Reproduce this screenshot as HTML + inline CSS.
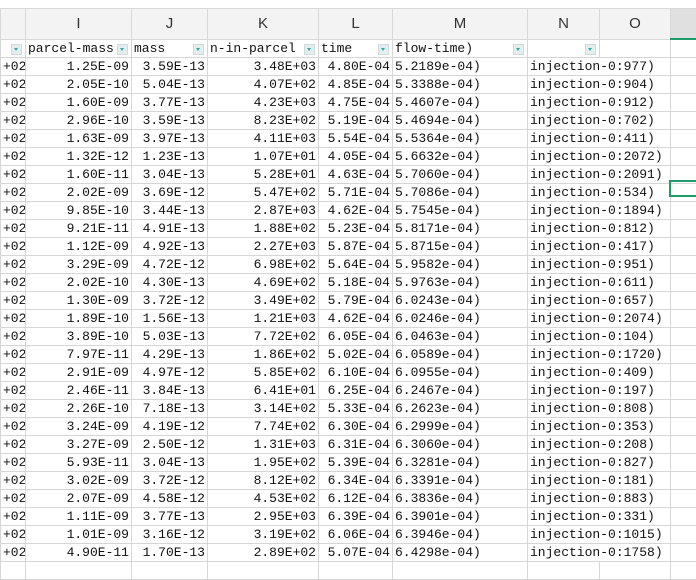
<!DOCTYPE html>
<html><head><meta charset="utf-8"><style>
body{margin:0;width:696px;height:564px;overflow:hidden;background:#fff;font-family:"Liberation Mono","Noto Sans CJK SC",monospace;}
.top{position:absolute;left:0;top:0;width:696px;height:8px;background:#fff;border-bottom:1px solid #dcdcdc}
table{position:absolute;left:0;top:8px;border-collapse:collapse;table-layout:fixed;width:696px}
td{border:1px solid #d6d6d6;height:17px;padding:0 2px;font-size:13px;line-height:17px;white-space:nowrap;overflow:hidden;color:#111}
tr.h td{height:29px;background:#f3f3f3;text-align:center;font-family:"Liberation Sans",sans-serif;font-size:15px;color:#333;border-color:#d8d8d8}
tr.h td.sel{background:#e0e0e0;border-bottom:2px solid #1f9b6b}
tr.f td{position:relative;padding-right:14px}
.dd{position:absolute;right:3px;top:4px;width:9px;height:9px;background:#e4eeee;border:1px solid #cfdcdc}
.dd:after{content:"";position:absolute;left:2px;top:3px;border-left:2.5px solid transparent;border-right:2.5px solid transparent;border-top:3px solid #3aa;}
td.r{text-align:right}
td.v{overflow:visible;border-right-style:hidden;position:relative;z-index:2}
.selc{position:absolute;left:669px;top:180px;width:27px;height:17px;border:2px solid #1f9b6b;box-sizing:border-box;border-right:none}
</style></head><body>
<div class="top"></div>
<table>
<colgroup><col style="width:25px"><col style="width:106px"><col style="width:76px"><col style="width:111px"><col style="width:74px"><col style="width:135px"><col style="width:72px"><col style="width:71px"><col style="width:26px"></colgroup>
<tr class="h"><td></td><td>I</td><td>J</td><td>K</td><td>L</td><td>M</td><td>N</td><td>O</td><td class="sel"></td></tr>
<tr class="f"><td><span class="dd"></span></td><td>parcel-mass<span class="dd"></span></td><td>mass<span class="dd"></span></td><td>n-in-parcel<span class="dd"></span></td><td>time<span class="dd"></span></td><td>flow-time)<span class="dd"></span></td><td><span class="dd"></span></td><td></td><td></td></tr>
<tr><td class="r">+02</td><td class="r">1.25E-09</td><td class="r">3.59E-13</td><td class="r">3.48E+03</td><td class="r">4.80E-04</td><td>5.2189e-04)</td><td class="v">injection-0:977)</td><td></td><td></td></tr>
<tr><td class="r">+02</td><td class="r">2.05E-10</td><td class="r">5.04E-13</td><td class="r">4.07E+02</td><td class="r">4.85E-04</td><td>5.3388e-04)</td><td class="v">injection-0:904)</td><td></td><td></td></tr>
<tr><td class="r">+02</td><td class="r">1.60E-09</td><td class="r">3.77E-13</td><td class="r">4.23E+03</td><td class="r">4.75E-04</td><td>5.4607e-04)</td><td class="v">injection-0:912)</td><td></td><td></td></tr>
<tr><td class="r">+02</td><td class="r">2.96E-10</td><td class="r">3.59E-13</td><td class="r">8.23E+02</td><td class="r">5.19E-04</td><td>5.4694e-04)</td><td class="v">injection-0:702)</td><td></td><td></td></tr>
<tr><td class="r">+02</td><td class="r">1.63E-09</td><td class="r">3.97E-13</td><td class="r">4.11E+03</td><td class="r">5.54E-04</td><td>5.5364e-04)</td><td class="v">injection-0:411)</td><td></td><td></td></tr>
<tr><td class="r">+02</td><td class="r">1.32E-12</td><td class="r">1.23E-13</td><td class="r">1.07E+01</td><td class="r">4.05E-04</td><td>5.6632e-04)</td><td class="v">injection-0:2072)</td><td></td><td></td></tr>
<tr><td class="r">+02</td><td class="r">1.60E-11</td><td class="r">3.04E-13</td><td class="r">5.28E+01</td><td class="r">4.63E-04</td><td>5.7060e-04)</td><td class="v">injection-0:2091)</td><td></td><td></td></tr>
<tr><td class="r">+02</td><td class="r">2.02E-09</td><td class="r">3.69E-12</td><td class="r">5.47E+02</td><td class="r">5.71E-04</td><td>5.7086e-04)</td><td class="v">injection-0:534)</td><td></td><td></td></tr>
<tr><td class="r">+02</td><td class="r">9.85E-10</td><td class="r">3.44E-13</td><td class="r">2.87E+03</td><td class="r">4.62E-04</td><td>5.7545e-04)</td><td class="v">injection-0:1894)</td><td></td><td></td></tr>
<tr><td class="r">+02</td><td class="r">9.21E-11</td><td class="r">4.91E-13</td><td class="r">1.88E+02</td><td class="r">5.23E-04</td><td>5.8171e-04)</td><td class="v">injection-0:812)</td><td></td><td></td></tr>
<tr><td class="r">+02</td><td class="r">1.12E-09</td><td class="r">4.92E-13</td><td class="r">2.27E+03</td><td class="r">5.87E-04</td><td>5.8715e-04)</td><td class="v">injection-0:417)</td><td></td><td></td></tr>
<tr><td class="r">+02</td><td class="r">3.29E-09</td><td class="r">4.72E-12</td><td class="r">6.98E+02</td><td class="r">5.64E-04</td><td>5.9582e-04)</td><td class="v">injection-0:951)</td><td></td><td></td></tr>
<tr><td class="r">+02</td><td class="r">2.02E-10</td><td class="r">4.30E-13</td><td class="r">4.69E+02</td><td class="r">5.18E-04</td><td>5.9763e-04)</td><td class="v">injection-0:611)</td><td></td><td></td></tr>
<tr><td class="r">+02</td><td class="r">1.30E-09</td><td class="r">3.72E-12</td><td class="r">3.49E+02</td><td class="r">5.79E-04</td><td>6.0243e-04)</td><td class="v">injection-0:657)</td><td></td><td></td></tr>
<tr><td class="r">+02</td><td class="r">1.89E-10</td><td class="r">1.56E-13</td><td class="r">1.21E+03</td><td class="r">4.62E-04</td><td>6.0246e-04)</td><td class="v">injection-0:2074)</td><td></td><td></td></tr>
<tr><td class="r">+02</td><td class="r">3.89E-10</td><td class="r">5.03E-13</td><td class="r">7.72E+02</td><td class="r">6.05E-04</td><td>6.0463e-04)</td><td class="v">injection-0:104)</td><td></td><td></td></tr>
<tr><td class="r">+02</td><td class="r">7.97E-11</td><td class="r">4.29E-13</td><td class="r">1.86E+02</td><td class="r">5.02E-04</td><td>6.0589e-04)</td><td class="v">injection-0:1720)</td><td></td><td></td></tr>
<tr><td class="r">+02</td><td class="r">2.91E-09</td><td class="r">4.97E-12</td><td class="r">5.85E+02</td><td class="r">6.10E-04</td><td>6.0955e-04)</td><td class="v">injection-0:409)</td><td></td><td></td></tr>
<tr><td class="r">+02</td><td class="r">2.46E-11</td><td class="r">3.84E-13</td><td class="r">6.41E+01</td><td class="r">6.25E-04</td><td>6.2467e-04)</td><td class="v">injection-0:197)</td><td></td><td></td></tr>
<tr><td class="r">+02</td><td class="r">2.26E-10</td><td class="r">7.18E-13</td><td class="r">3.14E+02</td><td class="r">5.33E-04</td><td>6.2623e-04)</td><td class="v">injection-0:808)</td><td></td><td></td></tr>
<tr><td class="r">+02</td><td class="r">3.24E-09</td><td class="r">4.19E-12</td><td class="r">7.74E+02</td><td class="r">6.30E-04</td><td>6.2999e-04)</td><td class="v">injection-0:353)</td><td></td><td></td></tr>
<tr><td class="r">+02</td><td class="r">3.27E-09</td><td class="r">2.50E-12</td><td class="r">1.31E+03</td><td class="r">6.31E-04</td><td>6.3060e-04)</td><td class="v">injection-0:208)</td><td></td><td></td></tr>
<tr><td class="r">+02</td><td class="r">5.93E-11</td><td class="r">3.04E-13</td><td class="r">1.95E+02</td><td class="r">5.39E-04</td><td>6.3281e-04)</td><td class="v">injection-0:827)</td><td></td><td></td></tr>
<tr><td class="r">+02</td><td class="r">3.02E-09</td><td class="r">3.72E-12</td><td class="r">8.12E+02</td><td class="r">6.34E-04</td><td>6.3391e-04)</td><td class="v">injection-0:181)</td><td></td><td></td></tr>
<tr><td class="r">+02</td><td class="r">2.07E-09</td><td class="r">4.58E-12</td><td class="r">4.53E+02</td><td class="r">6.12E-04</td><td>6.3836e-04)</td><td class="v">injection-0:883)</td><td></td><td></td></tr>
<tr><td class="r">+02</td><td class="r">1.11E-09</td><td class="r">3.77E-13</td><td class="r">2.95E+03</td><td class="r">6.39E-04</td><td>6.3901e-04)</td><td class="v">injection-0:331)</td><td></td><td></td></tr>
<tr><td class="r">+02</td><td class="r">1.01E-09</td><td class="r">3.16E-12</td><td class="r">3.19E+02</td><td class="r">6.06E-04</td><td>6.3946e-04)</td><td class="v">injection-0:1015)</td><td></td><td></td></tr>
<tr><td class="r">+02</td><td class="r">4.90E-11</td><td class="r">1.70E-13</td><td class="r">2.89E+02</td><td class="r">5.07E-04</td><td>6.4298e-04)</td><td class="v">injection-0:1758)</td><td></td><td></td></tr>
<tr><td></td><td></td><td></td><td></td><td></td><td></td><td></td><td></td><td></td></tr>
</table>
<div class="selc"></div>
</body></html>
